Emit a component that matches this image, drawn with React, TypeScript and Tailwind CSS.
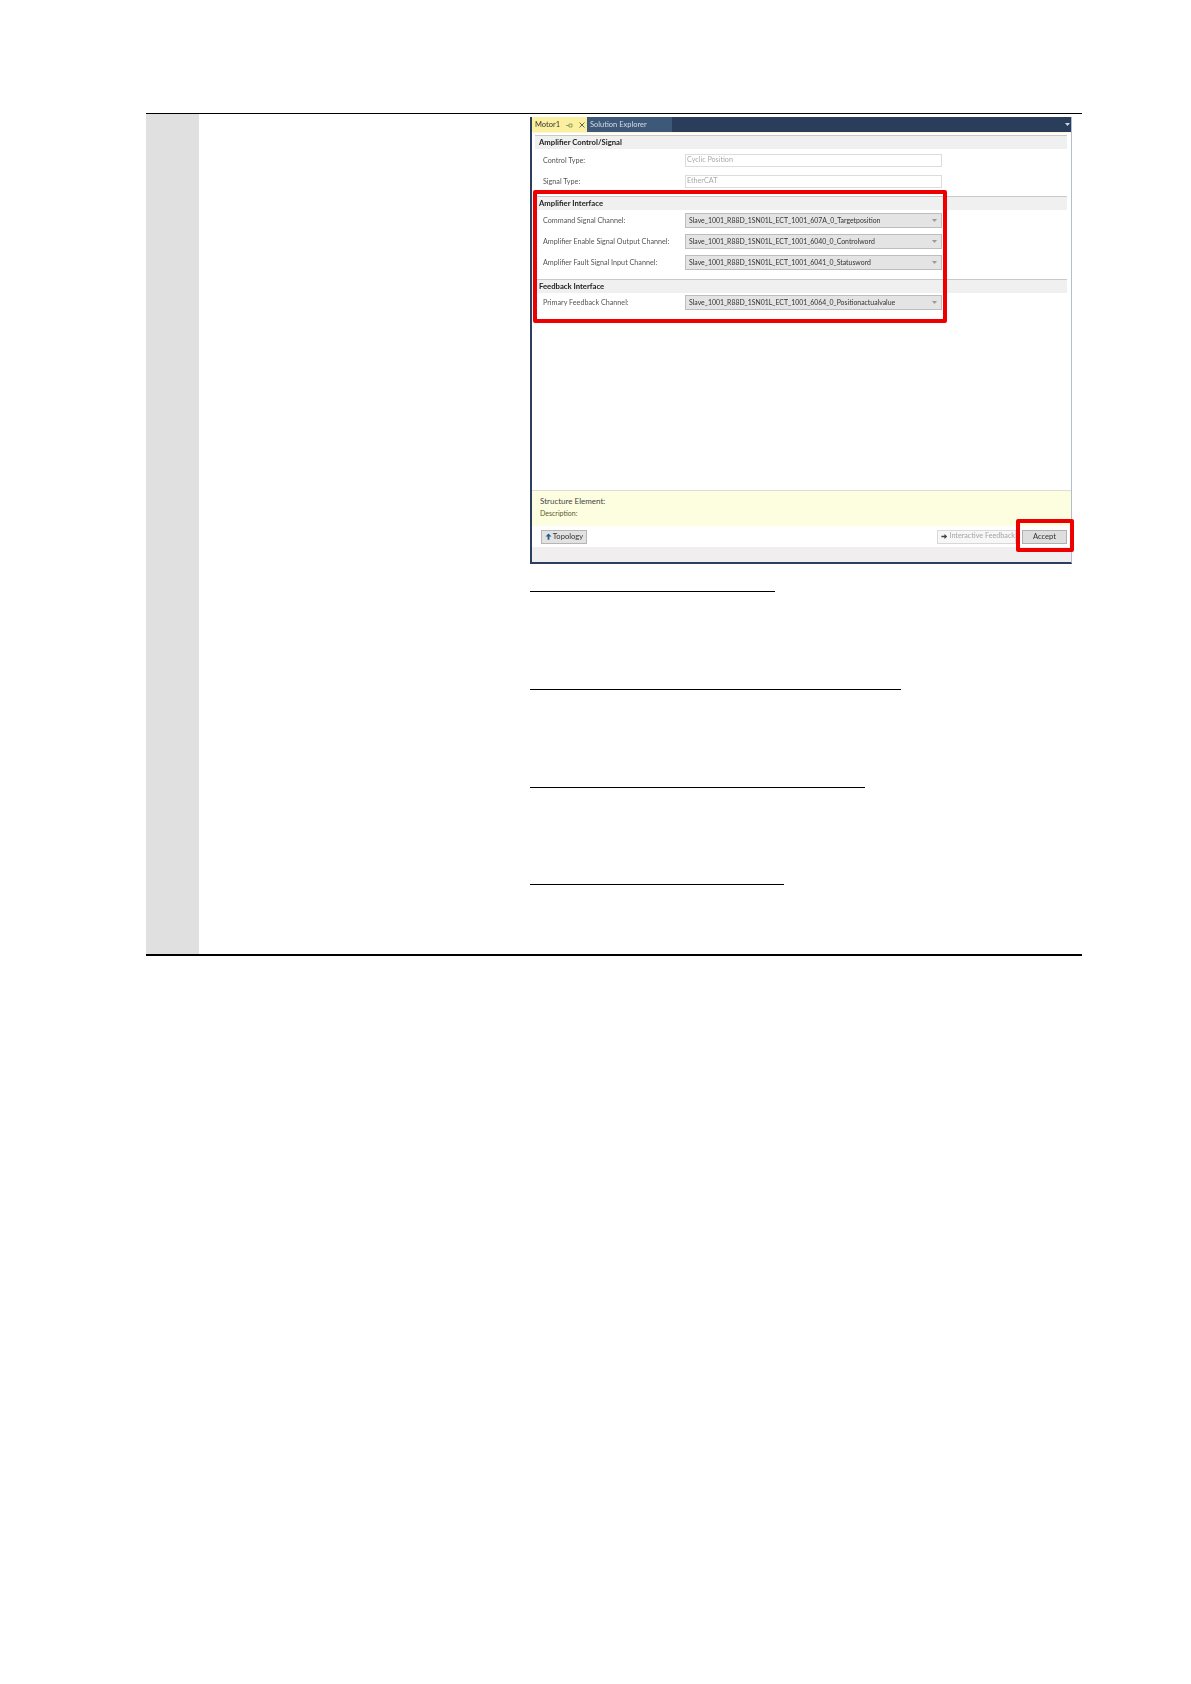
import React from 'react';

const uiFont = 'font-["Lato","Open_Sans",sans-serif]';

const SectionHeader = ({ title, className = '' }: { title: string; className?: string }) => (
  <div className={`h-[14px] ml-[3px] mr-[4px] bg-[#f0f0f0] border-t border-[#c9c9c9] pl-[4px] flex items-center text-[7.7px] font-bold text-[#222] ${className}`}>
    {title}
  </div>
);

const ReadOnlyRow = ({ label, value, className = '' }: { label: string; value: string; className?: string }) => (
  <div className={`flex items-center h-[13px] pl-[11px] ${className}`}>
    <span className="w-[142px] pt-[1px] text-[7.2px] text-[#555]">{label}</span>
    <div className="w-[257px] h-[13px] bg-white border border-[#dcdcdc] pl-[1px] flex items-center text-[7.2px] text-[#aaa]">{value}</div>
  </div>
);

const SelectRow = ({ label, value, className = '' }: { label: string; value: string; className?: string }) => (
  <div className={`flex items-center h-[15px] pl-[11px] ${className}`}>
    <span className="w-[142px] pt-[1px] text-[7.2px] text-[#555] whitespace-nowrap">{label}</span>
    <div className="w-[257px] h-[15px] bg-[#e4e4e4] border border-[#bdbdbd] pl-[3px] pr-[4px] flex items-center justify-between text-[6.9px] text-[#333]">
      <span className="whitespace-nowrap">{value}</span>
      <svg width="5" height="3" viewBox="0 0 5 3"><path d="M0 0h5L2.5 3z" fill="#999" /></svg>
    </div>
  </div>
);

const MotorPanel = () => (
  <div className={`relative w-[542px] h-[447px] bg-white border-l-2 border-r border-b-2 border-[#2c3f5c] border-r-[#b4bdd0] flex flex-col ${uiFont}`}>
    <div className="h-[15px] bg-[#2a3e5c] flex items-stretch shrink-0 text-[7.5px] blur-[0.3px]">
      <div className="w-[55px] bg-[#fbf0a0] flex items-center pl-[3px] pt-[1px] gap-[6px] text-[#333]">
        <span>Motor1</span>
        <svg width="7" height="5" viewBox="0 0 7 5"><path d="M0 2.5h3M3 1v3M3 1h3v3H3" fill="none" stroke="#7a8a50" strokeWidth="0.8" /></svg>
        <svg width="6" height="6" viewBox="0 0 6 6"><path d="M0.5 0.5l5 5M5.5 0.5l-5 5" stroke="#555" strokeWidth="0.9" /></svg>
      </div>
      <div className="w-[85px] bg-[#3d5878] flex items-center pl-[3px] pt-[1px] text-[#d5dde8]">Solution Explorer</div>
      <div className="flex-1 flex items-center justify-end pr-[1px]">
        <svg width="5" height="3" viewBox="0 0 5 3"><path d="M0 0h5L2.5 3z" fill="#cfd8e6" /></svg>
      </div>
    </div>
    <div className="h-[1px] ml-[1px] bg-[#fdf8d0] shrink-0" />

    <div className="flex-1 flex flex-col blur-[0.3px]">
      <SectionHeader title="Amplifier Control/Signal" className="mt-[2px]" />
      <ReadOnlyRow label="Control Type:" value="Cyclic Position" className="mt-[5px]" />
      <ReadOnlyRow label="Signal Type:" value="EtherCAT" className="mt-[8px]" />

      <SectionHeader title="Amplifier Interface" className="mt-[8px]" />
      <SelectRow label="Command Signal Channel:" value="Slave_1001_R88D_1SN01L_ECT_1001_607A_0_Targetposition" className="mt-[3px]" />
      <SelectRow label="Amplifier Enable Signal Output Channel:" value="Slave_1001_R88D_1SN01L_ECT_1001_6040_0_Controlword" className="mt-[6px]" />
      <SelectRow label="Amplifier Fault Signal Input Channel:" value="Slave_1001_R88D_1SN01L_ECT_1001_6041_0_Statusword" className="mt-[6px]" />

      <SectionHeader title="Feedback Interface" className="mt-[9px]" />
      <SelectRow label="Primary Feedback Channel:" value="Slave_1001_R88D_1SN01L_ECT_1001_6064_0_Positionactualvalue" className="mt-[2px]" />

      <div className="flex-1" />

      <div className="h-[36px] bg-[#fdfde0] border-t border-[#dcdcdc] pl-[8px] pt-[4px] shrink-0">
        <div className="text-[8px] leading-[12px] text-[#444]">Structure Element:</div>
        <div className="text-[7px] leading-[12px] text-[#5a5a30]">Description:</div>
      </div>
      <div className="h-[21px] flex items-center justify-between pl-[9px] pr-[4px] shrink-0">
        <div className="w-[46px] h-[14px] bg-[#e2e2e2] border border-[#b5b5b5] flex items-center justify-center gap-[1px] text-[7.6px] text-[#333]">
          <svg width="7" height="7" viewBox="0 0 7 7"><path d="M3.5 0.5L6.5 3.5H4.4V6.8H2.6V3.5H0.5z" fill="#1f5f8f" /></svg>
          Topology
        </div>
        <div className="flex items-center gap-[6px]">
          <div className="w-[79px] h-[14px] bg-[#f7f7f7] border border-[#d8d8d8] flex items-center justify-start pl-[3px] gap-[2px] text-[7.2px] text-[#a5a5a5] whitespace-nowrap">
            <svg width="7" height="7" viewBox="0 0 7 7"><path d="M6.7 3.5L3.7 0.7V2.6H0.4V4.4H3.7V6.3z" fill="#444" /></svg>
            Interactive Feedback
          </div>
          <div className="w-[45px] h-[14px] bg-[#dedede] border border-[#b0b0b0] flex items-center justify-center text-[7.6px] text-[#333]">Accept</div>
        </div>
      </div>
      <div className="flex-none h-[15px] bg-[#f0eeee]" />
    </div>

    <div className="absolute left-[1px] top-[73px] w-[414px] h-[133px] border-[4px] border-[#ee0000] rounded-[2px]" />
    <div className="absolute left-[484px] top-[402px] w-[58px] h-[33px] border-[4px] border-[#ee0000] rounded-[2px]" />
  </div>
);

export default function App() {
  return (
    <div className="min-h-[1684px] bg-white pt-[113px] pl-[146px]">
      <div className="w-[936px] h-[843px] border-t border-b-2 border-black flex">
        <div className="w-[53px] bg-[#e0e0e0] shrink-0" />
        <div className="w-[331px] shrink-0" />
        <div className="flex-1 pt-[3px]">
          <MotorPanel />
          <div className="w-[245px] h-px bg-black mt-[27px]" />
          <div className="w-[371px] h-px bg-black mt-[97px]" />
          <div className="w-[335px] h-px bg-black mt-[97px]" />
          <div className="w-[254px] h-px bg-black mt-[96px]" />
        </div>
      </div>
    </div>
  );
}
